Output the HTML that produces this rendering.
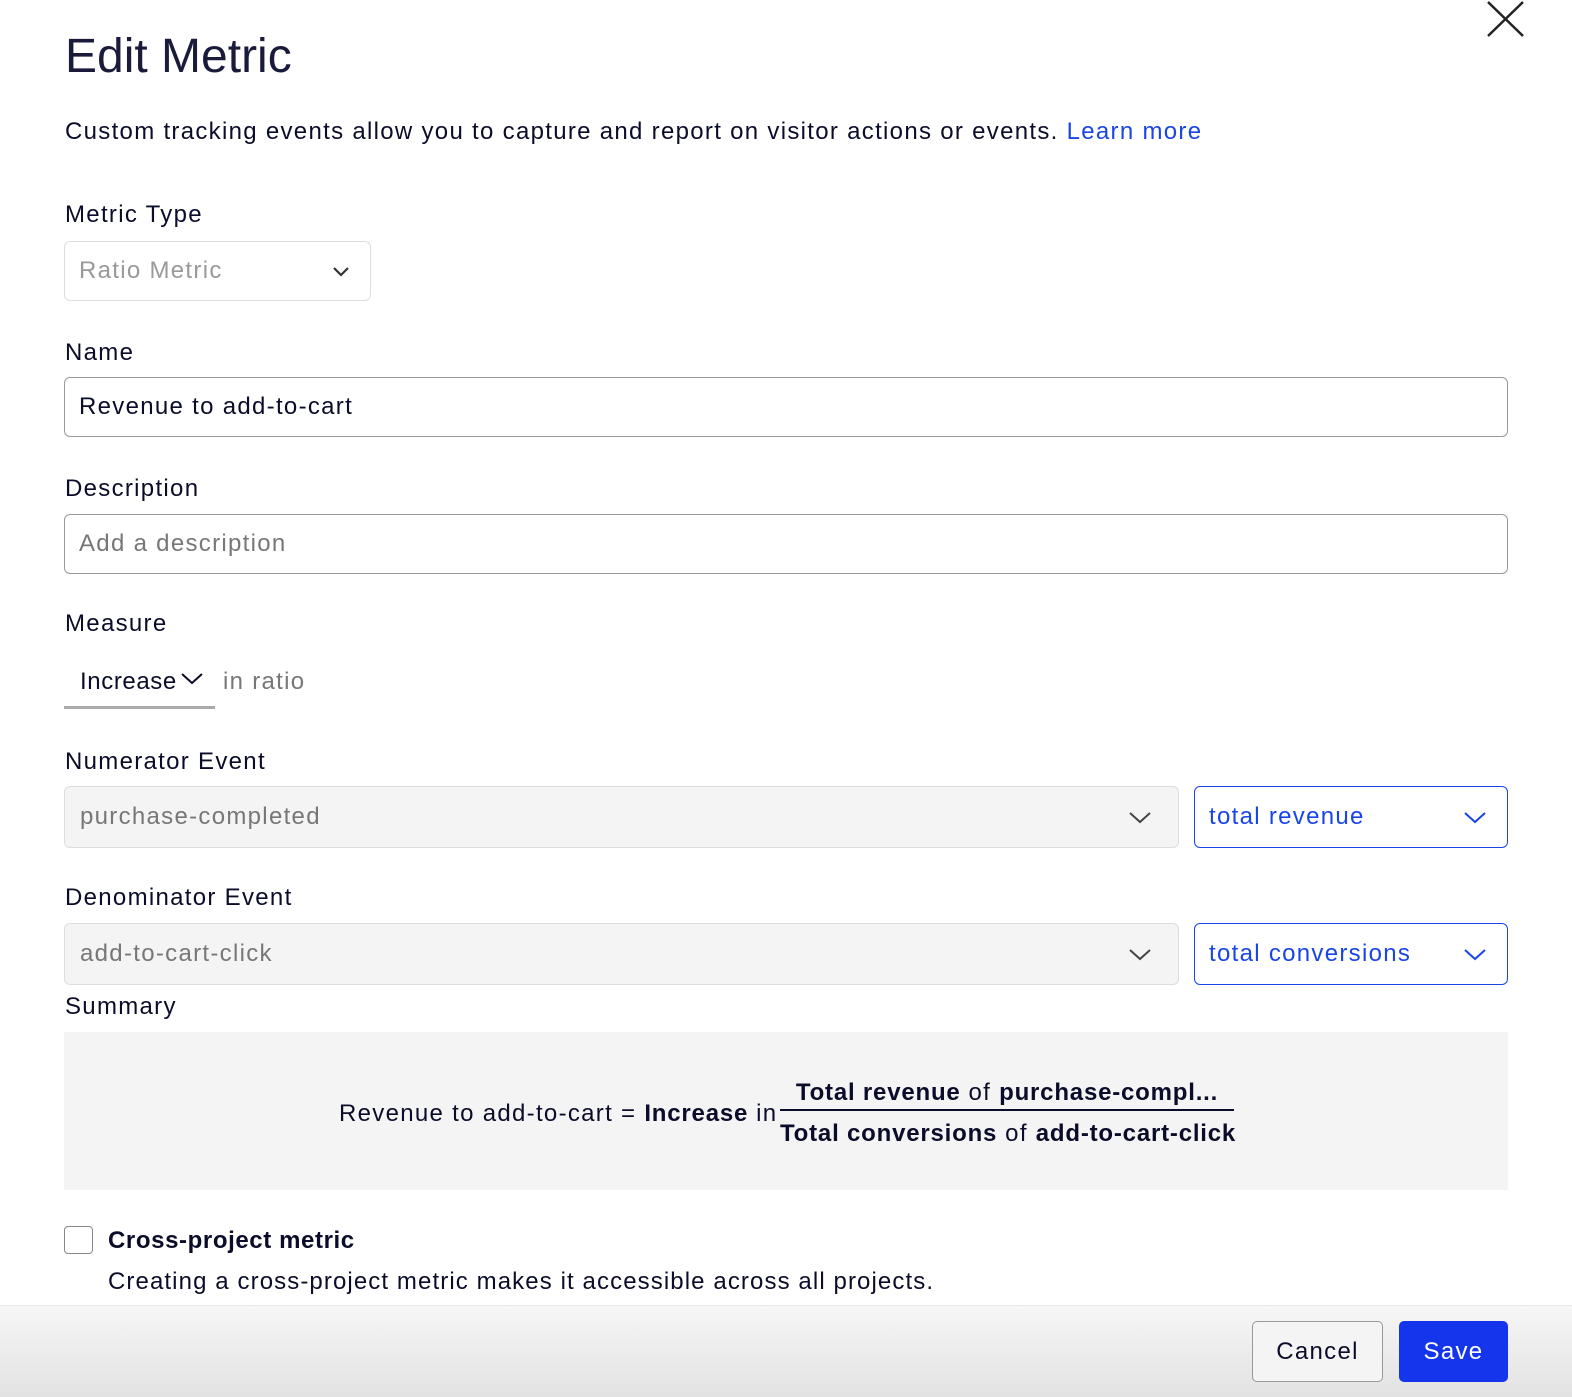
<!DOCTYPE html>
<html><head><style>
body{margin:0;width:1572px;height:1396px;background:#fff;font-family:"Liberation Sans",sans-serif;color:#0b0c2a;position:relative;overflow:hidden;letter-spacing:1.3px}
b{letter-spacing:0.8px}
.a{position:absolute}
.lbl{font-size:24px;left:65px}
.box{position:absolute;box-sizing:border-box;border:1px solid #b8b8b8;border-radius:6px;font-size:24px;padding-left:14px;display:flex;align-items:center}
.chev{position:absolute;right:20px;top:50%;margin-top:-6px}
</style></head><body>
<div class="a" style="left:65px;top:29px;font-size:48px;font-weight:300;color:#1a1b3a;letter-spacing:0">Edit Metric</div>
<svg class="a" style="left:1486px;top:0" width="40" height="38"><path d="M2 2L37 36M37 2L2 36" stroke="#222" stroke-width="2.5" fill="none"/></svg>
<div class="a" style="left:65px;top:118px;font-size:24px;white-space:nowrap">Custom tracking events allow you to capture and report on visitor actions or events. <span style="color:#1a45e6">Learn more</span></div>
<div class="a lbl" style="top:201px">Metric Type</div>
<div class="box" style="left:64px;top:241px;width:307px;height:60px;border-color:#ddd;color:#999">Ratio Metric<svg class="chev" width="18" height="12"><path d="M2 3L9 10L16 3" stroke="#333" stroke-width="2.2" fill="none"/></svg></div>
<div class="a lbl" style="top:339px">Name</div>
<div class="box" style="left:64px;top:377px;width:1444px;height:60px;border-color:#999">Revenue to add-to-cart</div>
<div class="a lbl" style="top:475px">Description</div>
<div class="box" style="left:64px;top:514px;width:1444px;height:60px;border-color:#999;color:#777">Add a description</div>
<div class="a lbl" style="top:610px">Measure</div>
<div class="a" style="left:80px;top:668px;font-size:24px;letter-spacing:0.6px">Increase</div>
<svg class="a" style="left:180px;top:672px" width="24" height="14"><path d="M2 2L12 11L22 2" stroke="#0b0c2a" stroke-width="2" fill="none"/></svg>
<div class="a" style="left:223px;top:668px;font-size:24px;color:#777">in ratio</div>
<div class="a" style="left:64px;top:706px;width:151px;height:3px;background:#aaa"></div>
<div class="a lbl" style="top:748px">Numerator Event</div>
<div class="box" style="left:64px;top:786px;width:1115px;height:62px;background:#f4f4f4;border-color:#ddd;color:#777;padding-left:15px">purchase-completed<svg class="chev" width="24" height="14" style="right:26px"><path d="M2 2L12 11L22 2" stroke="#444" stroke-width="2" fill="none"/></svg></div>
<div class="box" style="left:1194px;top:786px;width:314px;height:62px;border-color:#1a45e6;color:#1a45e6">total revenue<svg class="chev" width="24" height="14"><path d="M2 2L12 11L22 2" stroke="#1a45e6" stroke-width="2" fill="none"/></svg></div>
<div class="a lbl" style="top:884px">Denominator Event</div>
<div class="box" style="left:64px;top:923px;width:1115px;height:62px;background:#f4f4f4;border-color:#ddd;color:#777;padding-left:15px">add-to-cart-click<svg class="chev" width="24" height="14" style="right:26px"><path d="M2 2L12 11L22 2" stroke="#444" stroke-width="2" fill="none"/></svg></div>
<div class="box" style="left:1194px;top:923px;width:314px;height:62px;border-color:#1a45e6;color:#1a45e6">total conversions<svg class="chev" width="24" height="14"><path d="M2 2L12 11L22 2" stroke="#1a45e6" stroke-width="2" fill="none"/></svg></div>
<div class="a lbl" style="top:993px">Summary</div>
<div class="a" style="left:64px;top:1032px;width:1444px;height:158px;background:#f4f4f4"></div>
<div class="a" style="left:339px;top:1100px;font-size:24px;white-space:nowrap">Revenue to add-to-cart = <b>Increase</b> in</div>
<div class="a" style="left:780px;top:1079px;width:454px;text-align:center;font-size:24px;white-space:nowrap"><b>Total revenue</b> of <b>purchase-compl...</b></div>
<div class="a" style="left:780px;top:1109px;width:454px;height:2px;background:#0b0c2a"></div>
<div class="a" style="left:780px;top:1120px;width:454px;text-align:center;font-size:24px;white-space:nowrap"><b>Total conversions</b> of <b>add-to-cart-click</b></div>
<div class="a" style="left:64px;top:1226px;width:29px;height:28px;border:1.5px solid #888;border-radius:4px;box-sizing:border-box"></div>
<div class="a" style="left:108px;top:1227px;font-size:24px;font-weight:bold;letter-spacing:0.6px">Cross-project metric</div>
<div class="a" style="left:108px;top:1268px;font-size:24px;white-space:nowrap;letter-spacing:1.1px">Creating a cross-project metric makes it accessible across all projects.</div>
<div class="a" style="left:0;top:1305px;width:1572px;height:91px;background:linear-gradient(#f6f6f6,#e2e2e2);border-top:1px solid #e8e8e8"></div>
<div class="a" style="left:1252px;top:1321px;width:131px;height:61px;box-sizing:border-box;border:1px solid #999;border-radius:5px;background:#f4f4f4;font-size:24px;display:flex;align-items:center;justify-content:center">Cancel</div>
<div class="a" style="left:1399px;top:1321px;width:109px;height:61px;border-radius:5px;background:#1535ec;color:#fff;font-size:24px;display:flex;align-items:center;justify-content:center">Save</div>
</body></html>
